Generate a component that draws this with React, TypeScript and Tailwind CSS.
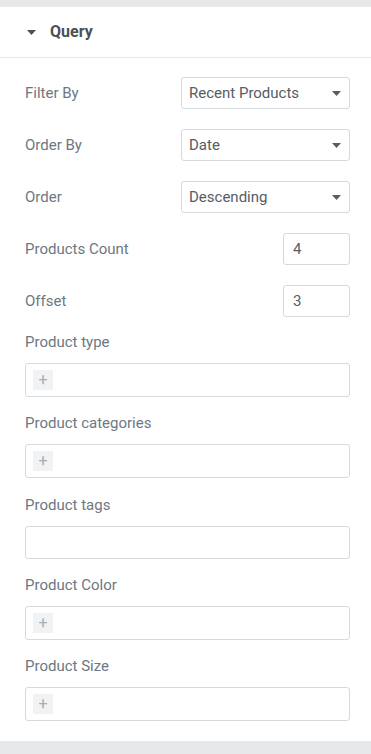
const Caret = ({ className = '' }: { className?: string }) => (
  <svg className={className} width="9" height="5" viewBox="0 0 9 5" fill="currentColor">
    <path d="M0 0h9L4.5 5z" />
  </svg>
);

const SelectRow = ({ label, value }: { label: string; value: string }) => (
  <div className="flex h-8 items-center justify-between">
    <span className="text-[15px] text-[#6d7882]">{label}</span>
    <div className="flex h-8 w-[169px] items-center justify-between rounded-[3px] border border-[#d5dadf] pl-[7px] pr-[8px] text-[15px] text-[#555d66]">
      <span>{value}</span>
      <Caret className="text-[#555d66]" />
    </div>
  </div>
);

const NumberRow = ({ label, value }: { label: string; value: string }) => (
  <div className="flex h-8 items-center justify-between">
    <span className="text-[15px] text-[#6d7882]">{label}</span>
    <div className="flex h-8 w-[67px] items-center rounded-[3px] border border-[#d5dadf] pl-[9px] text-[15px] text-[#555d66]">
      {value}
    </div>
  </div>
);

const PickerField = ({ label, plus = true, tall = true }: { label: string; plus?: boolean; tall?: boolean }) => (
  <div>
    <div className="h-[18px] text-[15px] leading-[18px] text-[#6d7882]">{label}</div>
    <div
      className={`mt-3 flex items-center rounded-[3px] border border-[#d5dadf] px-[7px] ${tall ? 'h-[34px]' : 'h-[33px]'}`}
    >
      {plus && (
        <div className="flex h-5 w-5 items-center justify-center bg-[#f1f2f3] text-[16px] leading-none text-[#a4afb7]">
          +
        </div>
      )}
    </div>
  </div>
);

export default function App() {
  return (
    <div className="min-h-[754px] w-[371px] bg-[#e6e8ea]" style={{ fontFamily: 'Roboto, "Liberation Sans", sans-serif' }}>
      <div className="h-[7px]" />
      <div className="bg-white">
        <div className="flex h-[51px] items-center border-b border-[#e6e8ea] pl-[27px]">
          <Caret className="text-[#495157]" />
          <span className="ml-[14px] text-[16px] font-bold text-[#495157]">Query</span>
        </div>
        <div className="pl-[25px] pr-[21px] pt-[19px] pb-[20px]">
          <div className="flex flex-col gap-5">
            <SelectRow label="Filter By" value="Recent Products" />
            <SelectRow label="Order By" value="Date" />
            <SelectRow label="Order" value="Descending" />
            <NumberRow label="Products Count" value="4" />
            <NumberRow label="Offset" value="3" />
          </div>
          <div className="mt-4 flex flex-col gap-[17px]">
            <PickerField label="Product type" />
            <PickerField label="Product categories" />
            <div className="mt-px">
              <PickerField label="Product tags" plus={false} tall={false} />
            </div>
            <PickerField label="Product Color" />
            <PickerField label="Product Size" />
          </div>
        </div>
      </div>
    </div>
  );
}
